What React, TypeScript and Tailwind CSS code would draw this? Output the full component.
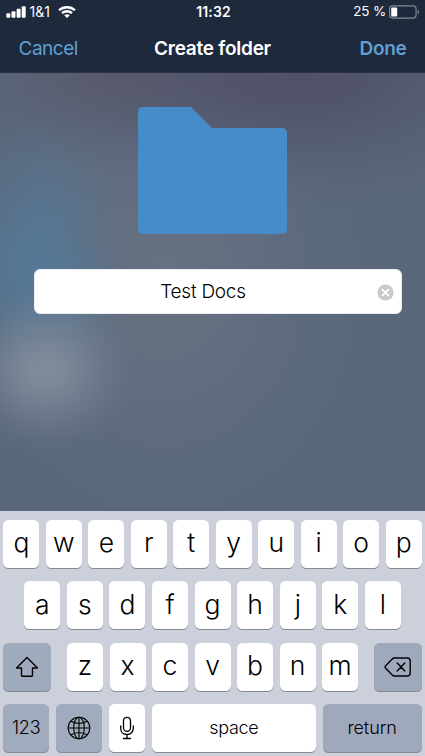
import React from "react";

function Key({ children, className = "" }: { children: React.ReactNode; className?: string }) {
  return (
    <button
      className={`flex h-12 shrink-0 items-center justify-center rounded-[5.5px] text-black shadow-[0_1px_0_#868a93] ${className}`}
    >
      {children}
    </button>
  );
}

function Letter({ char }: { char: string }) {
  return (
    <Key className="w-9 bg-white text-[26.5px] font-[340] leading-none">
      <span className="-mt-[3px]">{char}</span>
    </Key>
  );
}

function StatusBar() {
  return (
    <div className="flex h-6 items-center text-[13.5px] leading-none text-white">
      <div className="flex w-[170px] items-center pl-1.5">
        <svg width="20" height="12" viewBox="0 0 20 12" fill="currentColor">
          <rect x="0.3" y="7.2" width="4" height="4.6" rx="1" />
          <rect x="5.5" y="5.2" width="4" height="6.6" rx="1" />
          <rect x="10.6" y="2.8" width="4" height="9" rx="1" />
          <rect x="15.7" y="0.2" width="4" height="11.6" rx="1" />
        </svg>
        <span className="ml-[3.5px] w-[22px] whitespace-nowrap text-[14px] tracking-[0px]">1&amp;1</span>
        <svg className="ml-1.5" width="18" height="12" viewBox="0 0 17 12" preserveAspectRatio="none" fill="none" stroke="currentColor" strokeWidth="2.3">
          <path d="M1 4.3C5.2.2 11.8.2 16 4.3" />
          <path d="M3.8 7.1c2.7-2.5 6.7-2.5 9.4 0" />
          <path d="M8.5 11.9 5.9 9.2c1.5-1.3 3.7-1.3 5.2 0z" fill="currentColor" stroke="none" />
        </svg>
      </div>
      <span className="w-[87px] text-center text-[14px] font-semibold tracking-[0.1px]">11:32</span>
      <div className="flex w-[168px] items-center justify-end pr-[5px]">
        <span className="mr-[3px] whitespace-nowrap tracking-[-0.2px]">25 %</span>
        <svg width="31" height="14" viewBox="0 0 31 14" fill="none">
          <rect x="0.6" y="0.9" width="26.5" height="12.2" rx="3" stroke="#858b95" strokeWidth="1.1" />
          <rect x="2.2" y="2.5" width="6" height="9" rx="1" fill="#fff" />
          <path d="M28.6 5c2 .7 2 3.3 0 4z" fill="#858b95" />
        </svg>
      </div>
    </div>
  );
}

function NavBar() {
  return (
    <div className="flex h-12 items-center justify-between pl-[18.5px] pr-[18.5px] text-[19px] leading-none text-[#609fd5]">
      <span className="w-[100px] tracking-[-0.5px]">Cancel</span>
      <span className="whitespace-nowrap font-semibold tracking-[-0.25px] text-white">Create folder</span>
      <span className="w-[100px] text-right font-semibold tracking-[-0.3px]">Done</span>
    </div>
  );
}

function Keyboard() {
  return (
    <div className="flex h-[245px] flex-col gap-[13.3px] bg-[#ccd0db] px-[3.4px] pt-[9px]">
      <div className="flex justify-between">
        {"qwertyuiop".split("").map((c) => <Letter key={c} char={c} />)}
      </div>
      <div className="flex justify-between pl-[20.8px] pr-[20.6px]">
        {"asdfghjkl".split("").map((c) => <Letter key={c} char={c} />)}
      </div>
      <div className="flex justify-between">
        <Key className="w-[47.5px] bg-[#a0aabd]">
          <svg width="24" height="22" viewBox="0 0 24 22" fill="none" stroke="currentColor" strokeWidth="1.4" strokeLinejoin="round">
            <path d="M12 1.5 1.5 12h5v7.6q0 .7.7.7h9.6q.7 0 .7-.7V12h5z" />
          </svg>
        </Key>
        <div className="flex gap-[6.5px]">
          {"zxcvbnm".split("").map((c) => <Letter key={c} char={c} />)}
        </div>
        <Key className="w-[47.5px] bg-[#a0a9bc]">
          <svg width="28" height="20" viewBox="0 0 28 20" fill="none" stroke="currentColor" strokeWidth="1.4" strokeLinecap="round" strokeLinejoin="round">
            <path d="M10.2 1h13q3 0 3 3v12q0 3-3 3h-13q-1 0-1.7-.7L1.5 11q-.9-1 0-2l7-7.3Q9.2 1 10.2 1z" />
            <path d="m13.2 6 7.6 8m0-8-7.6 8" />
          </svg>
        </Key>
      </div>
      <div className="flex justify-between text-[18px] font-[350] leading-none">
        <Key className="w-[45.5px] bg-[#a0abbd]">
          <span className="tracking-[-0.2px]">123</span>
        </Key>
        <Key className="w-[46px] bg-[#a0abbd]">
          <svg width="24" height="24" viewBox="0 0 24 24" fill="none" stroke="currentColor" strokeWidth="1.1">
            <circle cx="12" cy="12" r="10.8" />
            <ellipse cx="12" cy="12" rx="5.3" ry="10.8" />
            <path d="M12 1.2v21.6M1.2 12h21.6M3.7 5q8.3 5 16.6 0M3.7 19q8.3-5 16.6 0" />
          </svg>
        </Key>
        <Key className="w-9 bg-white">
          <svg width="16" height="24" viewBox="0 0 16 24" fill="none" stroke="currentColor" strokeWidth="1.3" strokeLinecap="round">
            <rect x="4.5" y="1.3" width="7" height="14" rx="3.5" />
            <path d="M1.7 10v2.2c0 3.6 2.5 6.3 6.3 6.3s6.3-2.7 6.3-6.3V10M8 18.5v4M4.5 22.5h7" />
          </svg>
        </Key>
        <Key className="w-[163.5px] bg-white">
          <span className="tracking-[-0.3px]">space</span>
        </Key>
        <Key className="w-[99px] bg-[#a0a9bc]">
          <span className="tracking-[-0.1px]">return</span>
        </Key>
      </div>
    </div>
  );
}

export default function App() {
  return (
    <div className="flex h-[756px] w-[425px] flex-col overflow-hidden font-['Inter',sans-serif]">
      <header className="h-[73px] border-b border-[#283344] bg-[#1e293b]">
        <StatusBar />
        <NavBar />
      </header>
      <main className="flex h-[438px] flex-col items-center bg-[radial-gradient(ellipse_92px_85px_at_45px_297px,#808b9a_0%,#808b9ae8_18%,#808b9a99_42%,#808b9a40_68%,#808b9a10_87%,transparent_100%),radial-gradient(ellipse_90px_150px_at_38px_192px,#567896_0%,#567896d8_25%,#56789688_52%,#56789630_78%,transparent_100%),radial-gradient(ellipse_290px_140px_at_300px_0px,#505166_0%,#505166cc_25%,#50516666_55%,#5051661c_80%,transparent_100%),radial-gradient(ellipse_200px_90px_at_110px_0px,#5b5c6e_0%,#5b5c6e80_45%,#5b5c6e26_75%,transparent_100%),radial-gradient(ellipse_200px_240px_at_165px_205px,#667181_0%,#667181cc_30%,#66718166_60%,#6671811c_83%,transparent_100%)] bg-[#5a687c] pt-[33px]">
        <svg width="151" height="130" viewBox="0 0 151 130" fill="#468cc9">
          <path d="M6 1h48l21 21h70q5 0 5 5v96q0 5-5 5H6q-5 0-5-5V6q0-5 5-5z" />
        </svg>
        <div className="ml-[11px] mt-[33px] flex h-[45px] w-[368px] items-center rounded-[6px] border border-[#e8ebf0] bg-white pr-[7px]">
          <span className="flex-1 pr-[6px] text-center text-[19px] font-[340] leading-none tracking-[-0.25px] text-black">Test Docs</span>
          <svg className="mt-px" width="17" height="17" viewBox="0 0 17 17">
            <circle cx="8.5" cy="8.5" r="8.1" fill="#c9c9cb" />
            <path d="m5.6 5.6 5.8 5.8m0-5.8-5.8 5.8" stroke="#fff" strokeWidth="1.9" strokeLinecap="round" />
          </svg>
        </div>
      </main>
      <Keyboard />
    </div>
  );
}
